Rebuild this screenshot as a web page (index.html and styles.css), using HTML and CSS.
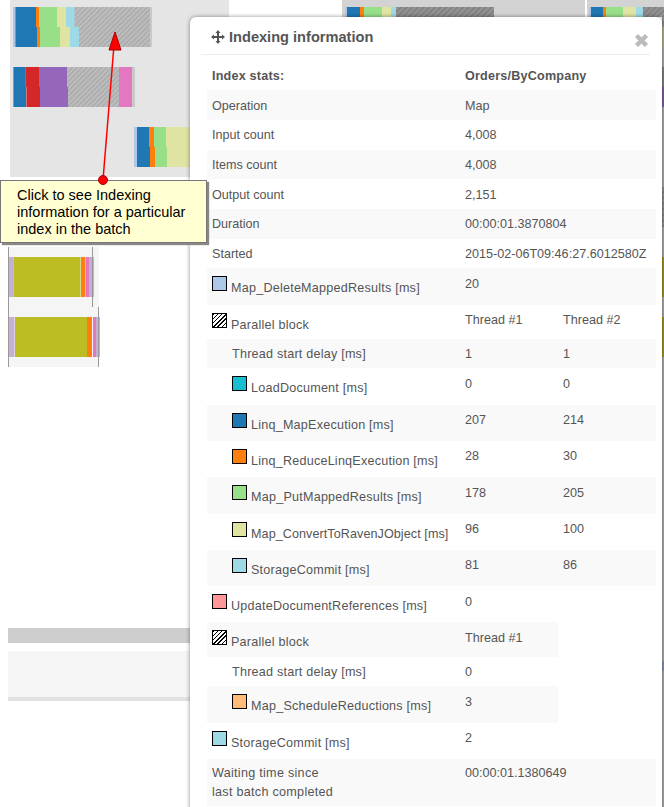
FILE: index.html
```html
<!DOCTYPE html>
<html lang="en">
<head>
    <meta charset="UTF-8">
    <meta name="viewport" content="width=device-width, initial-scale=1.0">
    <title>Indexing information</title>
    <link rel="stylesheet" href="styles.css">
</head>
<body>
    <!-- timeline behind the dialog -->
    <svg class="timeline" width="664" height="807" viewBox="0 0 664 807">
        <defs>
            <pattern id="hatch" width="3.5" height="3.5" patternUnits="userSpaceOnUse" patternTransform="rotate(45)">
                <rect width="3.5" height="3.5" fill="#bdbdbd"/>
                <rect width="1.3" height="3.5" fill="#a8a8a8"/>
            </pattern>
            <pattern id="hatchDark" width="4" height="4" patternUnits="userSpaceOnUse" patternTransform="rotate(45)">
                <rect width="4" height="4" fill="#939393"/>
                <rect width="1.4" height="4" fill="#7c7c7c"/>
            </pattern>
        </defs>

        <rect class="lane" x="10" y="0" width="219" height="177"/>
        <rect class="lane-dim" x="342" y="0" width="243" height="17"/>
        <rect class="lane-dim" x="587" y="0" width="77" height="17"/>

        <!-- batch 1 -->
        <rect class="edge" x="13" y="7" width="139" height="40"/>
        <rect x="15" y="7" width="135" height="40" fill="url(#hatch)"/>
        <rect class="sliver" x="13" y="7" width="3" height="40"/>
        <rect class="blue" x="15.5" y="7" width="20.5" height="20"/>
        <rect class="orange" x="36" y="7" width="3" height="20"/>
        <rect class="green" x="39" y="7" width="18" height="20"/>
        <rect class="khaki" x="57" y="7" width="9" height="20"/>
        <rect class="cyan" x="66" y="7" width="8.5" height="20"/>
        <rect class="blue" x="15.5" y="27" width="21.5" height="20"/>
        <rect class="orange" x="37" y="27" width="3" height="20"/>
        <rect class="green" x="40" y="27" width="20" height="20"/>
        <rect class="khaki" x="60" y="27" width="10" height="20"/>
        <rect class="cyan" x="70" y="27" width="9" height="20"/>

        <!-- batch 2 -->
        <rect class="edge" x="13" y="67" width="122" height="40"/>
        <rect x="67" y="67" width="52" height="40" fill="url(#hatch)"/>
        <rect class="blue" x="13.5" y="67" width="12" height="20"/>
        <rect class="red" x="25.5" y="67" width="13.5" height="20"/>
        <rect class="purple" x="39" y="67" width="28" height="20"/>
        <rect class="blue" x="13.5" y="87" width="12.5" height="20"/>
        <rect class="red" x="26.5" y="87" width="13.5" height="20"/>
        <rect class="purple" x="40" y="87" width="28" height="20"/>
        <rect class="pink" x="119" y="67" width="13" height="40"/>

        <!-- batch 3 -->
        <rect class="sliver" x="134" y="127" width="3" height="40"/>
        <rect class="blue" x="137" y="127" width="12.5" height="20"/>
        <rect class="orange" x="149.5" y="127" width="4.5" height="20"/>
        <rect class="green" x="154" y="127" width="12" height="20"/>
        <rect class="khaki" x="166" y="127" width="26" height="20"/>
        <rect class="blue" x="137" y="147" width="13" height="20"/>
        <rect class="orange" x="150" y="147" width="5" height="20"/>
        <rect class="green" x="155" y="147" width="12" height="20"/>
        <rect class="khaki" x="167" y="147" width="25" height="20"/>

        <!-- top right batches -->
        <rect class="sliver" x="345" y="7" width="2" height="10"/>
        <rect class="blue" x="347" y="7" width="13" height="10"/>
        <rect class="orange" x="360" y="7" width="4" height="10"/>
        <rect class="green" x="364" y="7" width="18" height="10"/>
        <rect class="khaki" x="382" y="7" width="9" height="10"/>
        <rect class="cyan" x="391" y="7" width="5" height="10"/>
        <rect x="396" y="7" width="98" height="10" fill="url(#hatchDark)"/>
        <rect class="sliver" x="589" y="7" width="2" height="10"/>
        <rect class="blue" x="591" y="7" width="12" height="10"/>
        <rect class="orange" x="603" y="7" width="3" height="10"/>
        <rect class="green" x="606" y="7" width="17" height="10"/>
        <rect class="khaki" x="623" y="7" width="13" height="10"/>
        <rect class="cyan" x="636" y="7" width="7" height="10"/>
        <rect x="643" y="7" width="21" height="10" fill="url(#hatchDark)"/>

        <!-- lower batches -->
        <rect class="pane" x="8" y="247" width="91" height="60"/>
        <rect class="pane" x="8" y="307" width="90" height="60"/>
        <rect class="lilac" x="8" y="257" width="5.5" height="40"/>
        <rect class="olive" x="13.5" y="257" width="67" height="40"/>
        <rect class="orange" x="81" y="257" width="4.5" height="40"/>
        <rect class="pink" x="86" y="257" width="3" height="40"/>
        <rect class="lilac" x="89" y="257" width="5" height="40"/>
        <rect class="lilac" x="8" y="317" width="6.5" height="40"/>
        <rect class="olive" x="15" y="317" width="72" height="40"/>
        <rect class="orange" x="87" y="317" width="5" height="40"/>
        <rect class="pink" x="93" y="317" width="3" height="40"/>
        <rect class="lilac" x="96" y="317" width="4" height="40"/>
        <rect class="tick" x="8" y="247" width="1" height="120"/>
        <rect class="tick" x="92" y="247" width="1" height="60"/>
        <rect class="tick" x="98" y="307" width="1" height="60"/>

        <!-- bottom panels -->
        <rect class="scroll" x="8" y="628" width="182" height="15"/>
        <rect class="pane" x="8" y="651" width="182" height="46"/>
        <rect class="pane-edge" x="8" y="697" width="182" height="4"/>

        <!-- what shows past the right edge of the dialog -->
        <rect class="strip" x="662" y="17" width="2" height="790"/>
        <rect x="662" y="17" width="2" height="10" fill="url(#hatchDark)"/>
        <rect class="strip-khaki" x="662" y="27" width="2" height="20"/>
        <rect class="strip-dark" x="662" y="67" width="2" height="20"/>
        <rect class="strip-purple" x="662" y="87" width="2" height="20"/>
        <rect x="662" y="187" width="2" height="40" fill="url(#hatchDark)"/>
        <rect class="strip-olive" x="662" y="257" width="2" height="40"/>
        <rect class="strip-olive" x="662" y="317" width="2" height="40"/>
        <rect class="strip-blue" x="662" y="661" width="2" height="10"/>
    </svg>

    <div class="dialog">
        <div class="dialog-header">
            <svg class="move-icon" width="14" height="14" viewBox="0 0 14 14">
                <path d="M7 0 L9.5 3 H8 V6 H11 V4.5 L14 7 L11 9.5 V8 H8 V11 H9.5 L7 14 L4.5 11 H6 V8 H3 V9.5 L0 7 L3 4.5 V6 H6 V3 H4.5 Z"/>
            </svg>
            <h4 class="dialog-title">Indexing information</h4>
            <svg class="close-icon" width="15" height="15" viewBox="0 0 15 15">
                <path d="M2.5 2.5 L12.5 12.5 M12.5 2.5 L2.5 12.5"/>
            </svg>
        </div>

        <table class="stats">
            <colgroup>
                <col class="col-label">
                <col class="col-value">
                <col class="col-value">
            </colgroup>
            <tr class="head"><td>Index stats:</td><td colspan="2">Orders/ByCompany</td></tr>
            <tr><td>Operation</td><td colspan="2">Map</td></tr>
            <tr><td>Input count</td><td colspan="2">4,008</td></tr>
            <tr><td>Items count</td><td colspan="2">4,008</td></tr>
            <tr><td>Output count</td><td colspan="2">2,151</td></tr>
            <tr><td>Duration</td><td colspan="2">00:00:01.3870804</td></tr>
            <tr><td>Started</td><td colspan="2">2015-02-06T09:46:27.6012580Z</td></tr>
            <tr class="metric-row">
                <td><div class="metric"><i class="swatch map-delete"></i><span>Map_DeleteMappedResults [ms]</span></div></td>
                <td colspan="2">20</td>
            </tr>
            <tr class="block-row">
                <td><div class="metric"><i class="swatch parallel"></i><span>Parallel block</span></div></td>
                <td>Thread #1</td><td>Thread #2</td>
            </tr>
            <tr>
                <td class="nested">Thread start delay [ms]</td>
                <td>1</td><td>1</td>
            </tr>
            <tr class="metric-row">
                <td class="nested"><div class="metric"><i class="swatch load-doc"></i><span>LoadDocument [ms]</span></div></td>
                <td>0</td><td>0</td>
            </tr>
            <tr class="metric-row">
                <td class="nested"><div class="metric"><i class="swatch linq-map"></i><span>Linq_MapExecution [ms]</span></div></td>
                <td>207</td><td>214</td>
            </tr>
            <tr class="metric-row">
                <td class="nested"><div class="metric"><i class="swatch linq-reduce"></i><span>Linq_ReduceLinqExecution [ms]</span></div></td>
                <td>28</td><td>30</td>
            </tr>
            <tr class="metric-row">
                <td class="nested"><div class="metric"><i class="swatch put-mapped"></i><span>Map_PutMappedResults [ms]</span></div></td>
                <td>178</td><td>205</td>
            </tr>
            <tr class="metric-row">
                <td class="nested"><div class="metric"><i class="swatch convert"></i><span class="tight">Map_ConvertToRavenJObject [ms]</span></div></td>
                <td>96</td><td>100</td>
            </tr>
            <tr class="metric-row">
                <td class="nested"><div class="metric"><i class="swatch storage"></i><span>StorageCommit [ms]</span></div></td>
                <td>81</td><td>86</td>
            </tr>
            <tr class="metric-row">
                <td><div class="metric"><i class="swatch update-refs"></i><span>UpdateDocumentReferences [ms]</span></div></td>
                <td colspan="2">0</td>
            </tr>
            <tr class="block-row">
                <td><div class="metric"><i class="swatch parallel"></i><span>Parallel block</span></div></td>
                <td>Thread #1</td>
            </tr>
            <tr>
                <td class="nested">Thread start delay [ms]</td>
                <td>0</td>
            </tr>
            <tr class="metric-row">
                <td class="nested"><div class="metric"><i class="swatch schedule"></i><span>Map_ScheduleReductions [ms]</span></div></td>
                <td>3</td>
            </tr>
            <tr class="metric-row">
                <td><div class="metric"><i class="swatch storage"></i><span>StorageCommit [ms]</span></div></td>
                <td colspan="2">2</td>
            </tr>
            <tr class="waiting">
                <td>Waiting time since<br>last batch completed</td>
                <td colspan="2">00:00:01.1380649</td>
            </tr>
        </table>
    </div>

    <!-- annotation on top of the screenshot -->
    <div class="callout">Click to see Indexing information for a particular index in the batch</div>
    <svg class="pointer" width="130" height="190" viewBox="0 0 130 190">
        <line x1="103" y1="180" x2="114" y2="45"/>
        <polygon points="115,32 109,50 121,50"/>
        <circle cx="103" cy="180" r="4.5"/>
    </svg>
</body>
</html>
```

FILE: styles.css
```css
* {
    margin: 0;
    padding: 0;
    box-sizing: border-box;
    font-family: 'Liberation Sans', Arial, sans-serif;
}

body {
    position: relative;
    width: 664px;
    height: 807px;
    overflow: hidden;
    background-color: #fff;
    color: #555;
}

/* timeline */
.timeline {
    display: block;
}

.lane { fill: #e5e5e5; }
.lane-dim { fill: #d3d3d3; }
.edge { fill: #c9c9c9; }
.sliver { fill: #aec7e8; }
.blue { fill: #1f77b4; }
.orange { fill: #ff7f0e; }
.green { fill: #98df8a; }
.khaki { fill: #e0e4a2; }
.cyan { fill: #9edae5; }
.red { fill: #d62728; }
.purple { fill: #9467bd; }
.pink { fill: #e377c2; }
.lilac { fill: #c5b0d5; }
.olive { fill: #bcbd22; }
.tick { fill: #999; }
.pane { fill: #f5f5f5; }
.pane-edge { fill: #e3e3e3; }
.scroll { fill: #cdcdcd; }
.strip { fill: #a8a8a8; }
.strip-khaki { fill: #aeae8c; }
.strip-dark { fill: #808080; }
.strip-purple { fill: #7a5fa5; }
.strip-olive { fill: #96971e; }
.strip-blue { fill: #8a90a8; }

/* dialog */
.dialog {
    position: absolute;
    left: 190px;
    top: 17px;
    width: 472px;
    height: 800px;
    background-color: #fff;
    border-radius: 6px 6px 0 0;
    box-shadow: 0 0 4px rgba(0,0,0,0.45);
}

.dialog-header {
    display: flex;
    align-items: flex-start;
    height: 38px;
    margin: 0 12px 0 11px;
    padding: 13px 1px 0 10px;
    border-bottom: 1px solid #eee;
}

.move-icon {
    flex-shrink: 0;
    fill: #555;
}

.dialog-title {
    flex: 1;
    margin-left: 4px;
    font-size: 14.6px;
    font-weight: bold;
    line-height: 14px;
    color: #555;
}

.close-icon {
    margin-top: 3px;
    fill: none;
    stroke: #bbb;
    stroke-width: 4.5;
}

.stats {
    width: 449px;
    margin: 5.5px 0 0 17px;
    border-collapse: collapse;
    table-layout: fixed;
    font-size: 12.6px;
    line-height: 19.67px;
}

.col-label {
    width: 253px;
}

.col-value {
    width: 98px;
}

.stats td {
    padding: 6.5px 5px 3.5px;
    vertical-align: top;
}

.stats tr:nth-child(even) td {
    background-color: #f9f9f9;
}

.stats .head td {
    font-weight: bold;
    letter-spacing: 0.2px;
}

.stats .nested {
    padding-left: 25px;
    letter-spacing: 0.22px;
}

.stats .waiting td {
    height: 47px;
    padding-top: 5px;
    line-height: 19px;
}

.stats .waiting td:first-child {
    letter-spacing: 0.28px;
}

.metric-row td {
    height: 36.3px;
}

.block-row td {
    height: 34px;
}

.metric {
    display: flex;
    gap: 4px;
    letter-spacing: 0.22px;
    white-space: nowrap;
}

.metric span {
    margin-top: 4.5px;
}

.metric .tight {
    letter-spacing: 0.07px;
}

.swatch {
    flex-shrink: 0;
    width: 15px;
    height: 15px;
    margin-top: 1.5px;
    border: 1px solid #000;
}

.map-delete { background-color: #aec7e8; }
.load-doc { background-color: #17becf; }
.linq-map { background-color: #1f77b4; }
.linq-reduce { background-color: #ff7f0e; }
.put-mapped { background-color: #98df8a; }
.convert { background-color: #e0e4a2; }
.storage { background-color: #9edae5; }
.update-refs { background-color: #ff9896; }
.schedule { background-color: #ffbb78; }

.parallel {
    background: repeating-linear-gradient(135deg, #000 0, #000 1px, #fff 1px, #fff 3px);
}

/* annotation */
.callout {
    position: absolute;
    left: 0;
    top: 180px;
    width: 207px;
    height: 63px;
    padding: 6px 10px 0 16px;
    background-color: #ffffd2;
    border: 1px solid #777;
    box-shadow: 2px 2px 1px #888;
    font-size: 14.5px;
    line-height: 17px;
    color: #000;
}

.pointer {
    position: absolute;
    left: 0;
    top: 0;
}

.pointer line {
    stroke: #f00;
    stroke-width: 1.5;
}

.pointer polygon {
    fill: #f00;
    stroke: #a00;
}

.pointer circle {
    fill: #f00;
    stroke: #a00;
}
```
